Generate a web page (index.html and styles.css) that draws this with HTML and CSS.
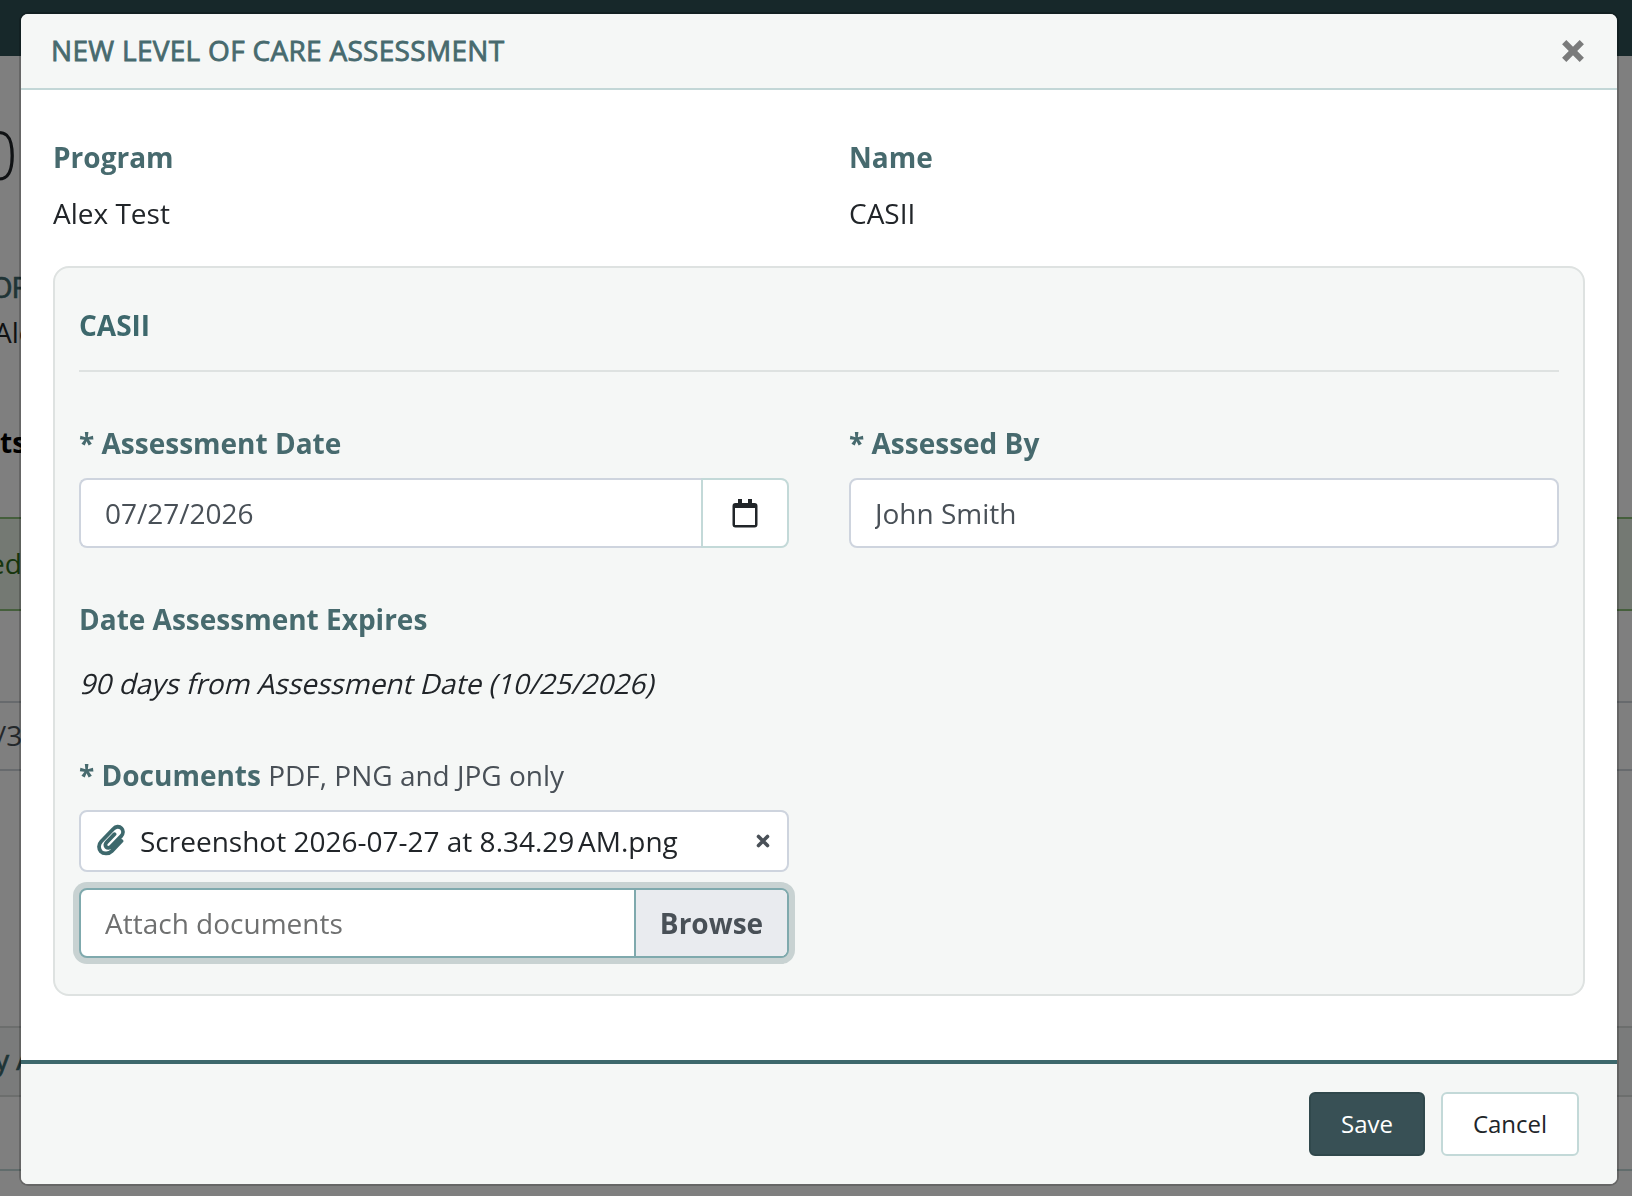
FILE: index.html
```html
<!DOCTYPE html>
<html lang="en">
<head>
    <meta charset="UTF-8">
    <meta name="viewport" content="width=device-width, initial-scale=1.0">
    <title>New Level of Care Assessment</title>
    <link rel="stylesheet" href="styles.css">
</head>
<body>

<!-- Page behind the modal -->
<div class="page">
    <div class="topbar"></div>
    <div class="page-number">0</div>
    <div class="page-label">OR</div>
    <div class="page-value">Ale</div>
    <div class="page-tabs">ts</div>
    <div class="page-alert">ed</div>
    <div class="page-gap"></div>
    <div class="page-date">/3</div>
    <div class="page-space"></div>
    <div class="page-head">y A</div>
    <div class="page-row"></div>
</div>

<!-- Modal -->
<div class="overlay">
    <div class="modal">
        <div class="modal-header">
            <h2>NEW LEVEL OF CARE ASSESSMENT</h2>
            <button class="close" aria-label="Close">
                <svg width="22" height="22" viewBox="0 0 22 22"><path d="M2.2 2.2 19.8 19.8M19.8 2.2 2.2 19.8" stroke="#7a7b7b" stroke-width="6"/></svg>
            </button>
        </div>

        <div class="modal-body">
            <div class="info">
                <div>
                    <div class="label">Program</div>
                    <div class="value">Alex Test</div>
                </div>
                <div>
                    <div class="label">Name</div>
                    <div class="value">CASII</div>
                </div>
            </div>

            <div class="panel">
                <h3>CASII</h3>
                <div class="fields">
                    <div>
                        <label class="label" for="date">* Assessment Date</label>
                        <div class="date-group">
                            <input class="input" type="text" id="date" value="07/27/2026">
                            <button class="calendar" aria-label="Pick a date">
                                <svg width="26" height="30" viewBox="0 0 26 30"><path fill="#212529" fill-rule="evenodd" d="M6 1h4v4h6V1h4v4h2.500a3 3 0 0 1 3 3v18.500a3 3 0 0 1-3 3h-19a3 3 0 0 1-3-3V8a3 3 0 0 1 3-3H6zM3 10v17h20V10z"/></svg>
                            </button>
                        </div>
                    </div>
                    <div>
                        <label class="label" for="by">* Assessed By</label>
                        <input class="input" type="text" id="by" value="John Smith">
                    </div>
                </div>

                <div class="label expires">Date Assessment Expires</div>
                <div class="expires-value">90 days from Assessment Date (10/25/2026)</div>

                <div class="documents">
                    <div class="label">* Documents <span class="hint">PDF, PNG and JPG only</span></div>
                    <div class="file">
                        <svg class="clip" width="28" height="32" viewBox="0 0 28 32" fill="none" stroke="#3d686c" stroke-linecap="round" stroke-linejoin="round">
                            <path stroke-width="3.800" d="M24.500 17 14.800 27.100C12 30 6.500 30.300 3.800 27.500C1.300 24.700 1.500 20.300 4.200 17.500L16.500 4.700C18.700 2.300 22.300 2 24.500 4.300C26.600 6.500 26.300 9.900 24.200 12.100L14 22.600C12.500 24.200 10.500 24.200 9.200 23C8 21.700 8.200 19.700 9.600 18.300L17.500 10.200"/>
                        </svg>
                        <span class="file-name">Screenshot 2026-07-27 at 8.34.29&#8239;AM.png</span>
                        <svg width="14" height="14" viewBox="0 0 14 14"><path d="M2.500 2.500l9 9M11.500 2.500l-9 9" stroke="#495057" stroke-width="3.600" stroke-linecap="round"/></svg>
                    </div>
                    <div class="attach">
                        <span class="attach-text">Attach documents</span>
                        <span class="browse">Browse</span>
                    </div>
                </div>
            </div>
        </div>

        <div class="modal-footer">
            <button class="btn save">Save</button>
            <button class="btn cancel">Cancel</button>
        </div>
    </div>
</div>

</body>
</html>
```
FILE: styles.css
```css
* {
    box-sizing: border-box;
}
body {
    margin: 0;
    height: 1196px;
    overflow: hidden;
    font-family: "Open Sans", "Noto Sans", sans-serif;
    font-size: 28px;
    line-height: 42px;
    color: #212529;
    background-color: #fff;
}
h2, h3 {
    margin: 0;
    font-size: 28px;
}
button {
    font-family: inherit;
    cursor: pointer;
}
svg {
    display: block;
}

/* page behind the modal */
.page {
    white-space: nowrap;
}
.topbar {
    height: 56px;
    background-color: #2e5055;
}
.page-number {
    height: 208px;
    padding-top: 63px;
    margin-left: -20px;
    font-size: 66px;
    font-weight: 300;
    line-height: 70px;
}
.page-label {
    height: 47px;
    padding-top: 2px;
    margin-left: -10px;
    font-size: 29px;
    letter-spacing: -1px;
    color: #41686c;
    -webkit-text-stroke: 0.7px #41686c;
}
.page-value {
    height: 110px;
    margin-left: -6px;
}
.page-tabs {
    height: 96px;
    margin-left: 0;
    font-weight: 700;
    color: #000;
}
.page-alert {
    height: 94px;
    padding: 23px 0;
    text-indent: -11px;
    color: #2f6a1a;
    background-color: #e8f3e6;
    border-top: 2px solid #8abf78;
    border-bottom: 2px solid #8abf78;
}
.page-gap {
    height: 90px;
}
.page-date {
    height: 70px;
    padding: 11px 0;
    text-indent: -4px;
    color: #495057;
    border-top: 2px solid #ced4da;
    border-bottom: 2px solid #ced4da;
}
.page-space {
    height: 255px;
}
.page-head {
    height: 71px;
    padding: 10px 0;
    text-indent: -5px;
    color: #3d686c;
    -webkit-text-stroke: 0.7px #3d686c;
    background-color: #f4f7f6;
    border-top: 2px solid #d8dcdb;
    border-bottom: 2px solid #d8dcdb;
}
.page-row {
    height: 74px;
    border-bottom: 2px solid #c3d9d8;
}

/* modal */
.overlay {
    position: fixed;
    inset: 0;
    padding: 14px 15px 12px 21px;
    background-color: rgba(0, 0, 0, 0.5);
}
.modal {
    display: flex;
    flex-direction: column;
    height: 1170px;
    overflow: hidden;
    border-radius: 7px;
    background-color: #fff;
    box-shadow: 0 0 0 2px rgba(0, 0, 0, 0.2);
}
.modal-header {
    display: flex;
    justify-content: space-between;
    align-items: center;
    height: 76px;
    padding: 0 33px 0 30px;
    background-color: #f5f7f6;
    border-bottom: 2px solid #c3d7d7;
}
.modal-header h2 {
    padding-bottom: 2px;
    font-weight: 400;
    letter-spacing: 0.3px;
    color: #476a6e;
    -webkit-text-stroke: 0.8px #476a6e;
}
.close {
    padding: 0;
    border: none;
    background: none;
}
.modal-body {
    flex: 1;
    padding: 46px 32px 0;
}
.info {
    display: grid;
    grid-template-columns: 796px 1fr;
    height: 130px;
}
.label {
    display: block;
    font-weight: 700;
    color: #476a6e;
}
.info .value {
    margin-top: 14px;
}
.panel {
    height: 730px;
    padding: 36px 24px 0;
    background-color: #f5f7f6;
    border: 2px solid #dee2e1;
    border-radius: 16px;
}
.panel h3 {
    height: 68px;
    font-weight: 700;
    color: #3d686c;
    border-bottom: 2px solid #dee2e1;
}
.fields {
    display: grid;
    grid-template-columns: 1fr 1fr;
    gap: 60px;
    padding-top: 50px;
}
.input {
    display: block;
    width: 100%;
    height: 70px;
    margin-top: 14px;
    padding: 0 24px;
    font-family: inherit;
    font-size: 28px;
    color: #495057;
    background-color: #fff;
    border: 2px solid #ced4de;
    border-radius: 8px;
}
.date-group {
    display: flex;
    margin-top: 14px;
}
.date-group .input {
    margin: 0;
    flex: 1;
    border-right: none;
    border-radius: 8px 0 0 8px;
}
.calendar {
    display: flex;
    justify-content: center;
    align-items: center;
    width: 88px;
    background-color: #fff;
    border: 2px solid #c3d9d8;
    border-radius: 0 8px 8px 0;
}
.expires {
    margin-top: 50px;
}
.expires-value {
    width: max-content;
    margin-top: 22px;
    transform: skewX(-14deg);
    transform-origin: 0 75%;
}
.documents {
    width: 710px;
    margin-top: 50px;
}
.hint {
    font-weight: 400;
    color: #495057;
}
.file {
    display: flex;
    align-items: center;
    height: 62px;
    margin-top: 14px;
    padding: 0 17px 0 16px;
    background-color: #fff;
    border: 2px solid #ced4de;
    border-radius: 8px;
}
.clip {
    margin: 0 15px 3px 0;
}
.file-name {
    flex: 1;
}
.attach {
    display: flex;
    align-items: stretch;
    height: 70px;
    margin-top: 16px;
    overflow: hidden;
    line-height: 66px;
    background-color: #fff;
    border: 2px solid #7fa9ad;
    border-radius: 8px;
    box-shadow: 0 0 0 6px #c8d2d2;
}
.attach-text {
    flex: 1;
    padding-left: 24px;
    color: #6f7070;
}
.browse {
    width: 153px;
    text-align: center;
    font-weight: 700;
    color: #495057;
    background-color: #e9ebef;
    border-left: 2px solid #7fa9ad;
}
.modal-footer {
    display: flex;
    justify-content: flex-end;
    gap: 16px;
    height: 124px;
    padding: 28px 38px 0;
    background-color: #f5f7f6;
    border-top: 4px solid #3d686c;
}
.btn {
    height: 64px;
    padding: 0 0 2px;
    font-size: 24px;
    border-radius: 6px;
}
.save {
    width: 116px;
    color: #fff;
    background-color: #385055;
    border: 2px solid #30484c;
}
.cancel {
    width: 138px;
    color: #212529;
    background-color: #fff;
    border: 2px solid #c3d9d8;
}
```
